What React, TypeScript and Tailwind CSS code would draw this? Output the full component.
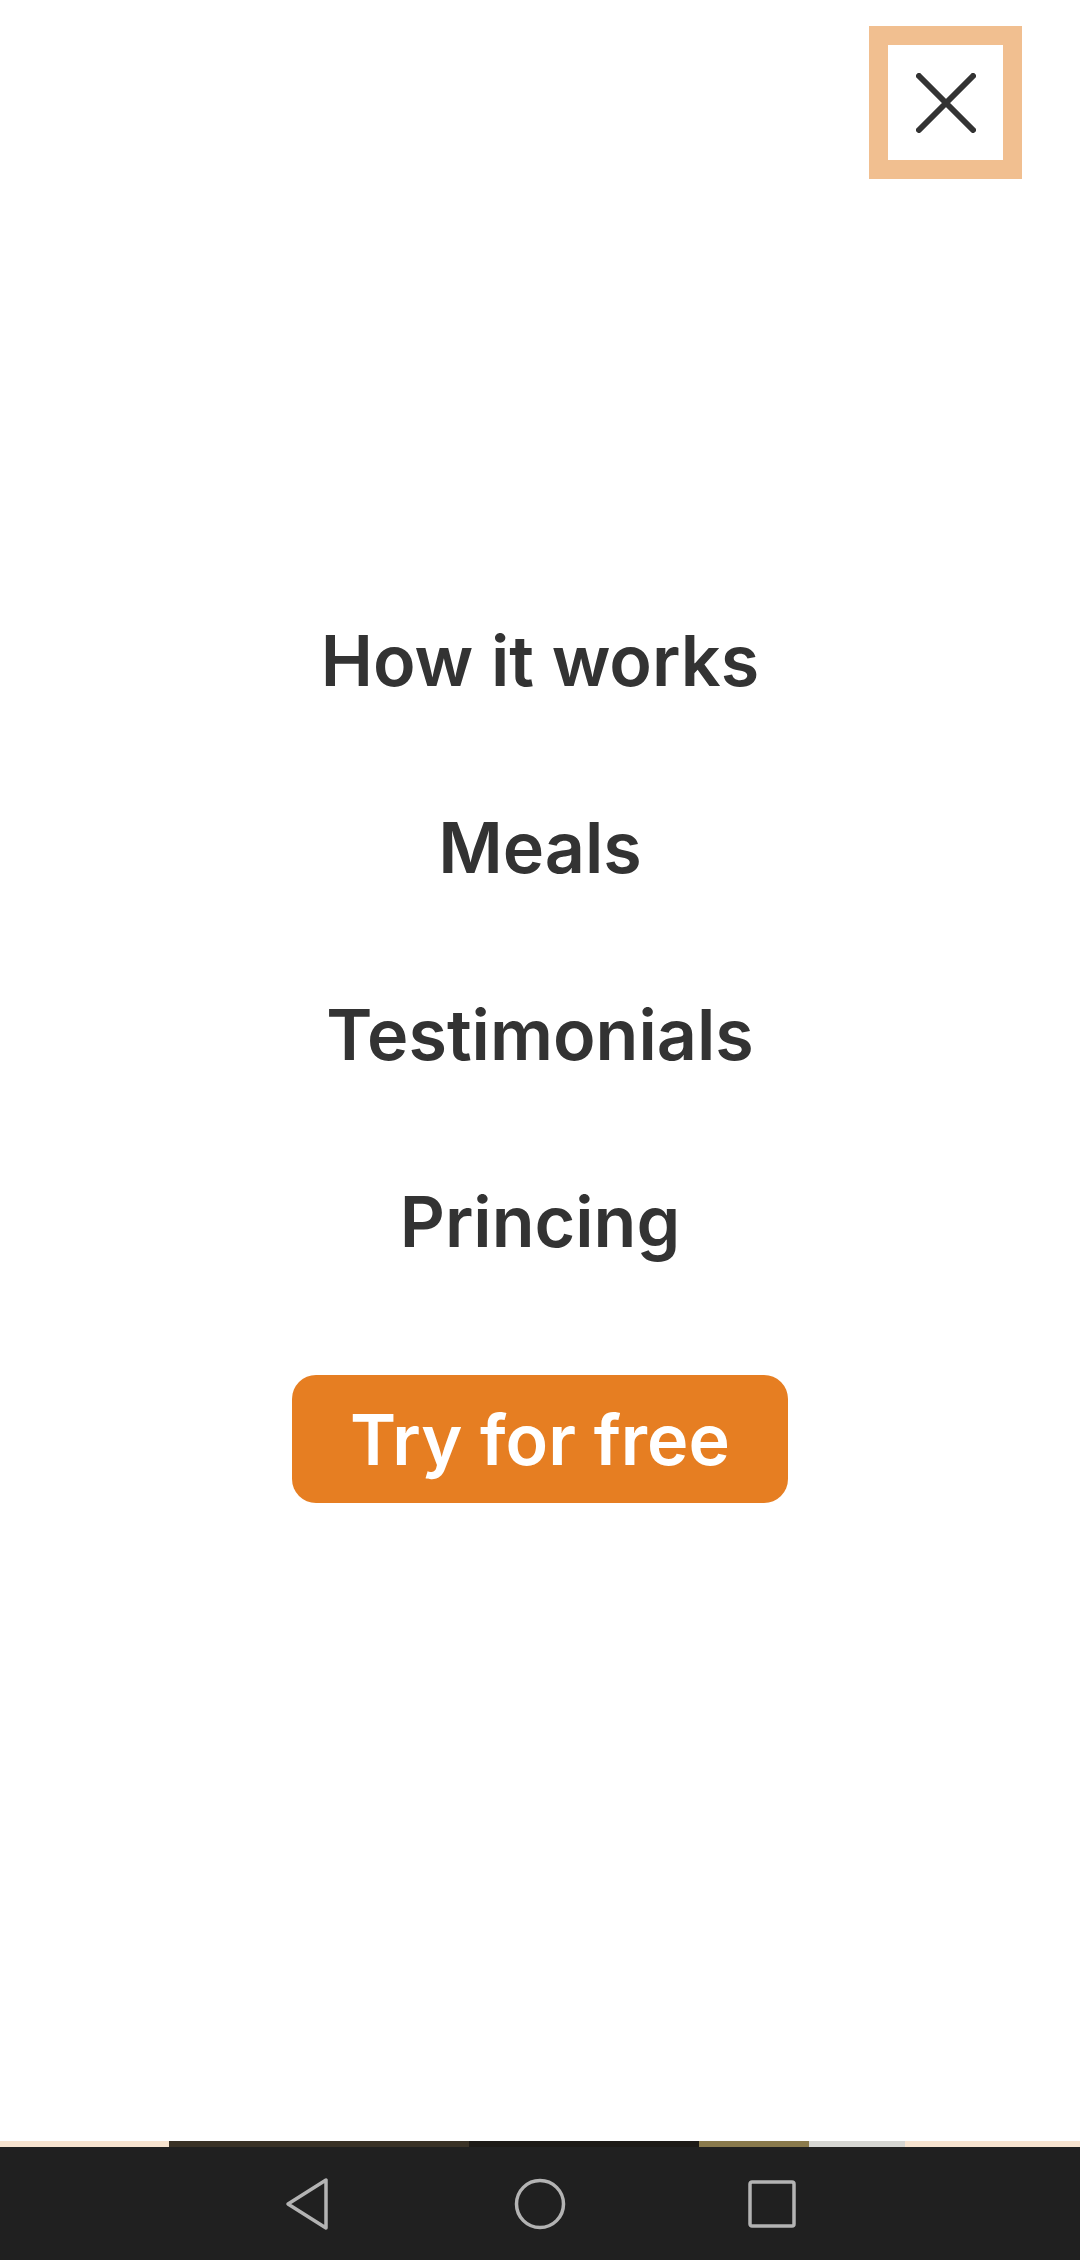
import React from 'react';

const links = ['How it works', 'Meals', 'Testimonials', 'Princing'];

// Close "X" icon inside the orange outlined box
const CloseIcon = () => (
  <svg width="60" height="60" viewBox="0 0 60 60" fill="none">
    <path d="M3 3 L57 57 M57 3 L3 57" stroke="#333333" strokeWidth="6" strokeLinecap="round" />
  </svg>
);

const NavBar = () => (
  <div className="flex flex-col">
    {/* sliver of the page content peeking under the menu */}
    <div className="flex h-[6px] bg-[#f7e3cf]">
      <div className="ml-[169px] h-full w-[300px] bg-[#3a3226]" />
      <div className="h-full w-[230px] bg-[#1d1a16]" />
      <div className="h-full w-[110px] bg-[#8a7a4c]" />
      <div className="h-full w-[96px] bg-[#d6d6d2]" />
    </div>
    <div className="flex h-[113px] items-center justify-center gap-[132px] bg-[#202020]">
      <div className="flex w-[100px] justify-center">
        <svg width="48" height="54" viewBox="0 0 48 54" fill="none">
          <path d="M42 3 L42 51 L4 27 Z" stroke="#b3b3b3" strokeWidth="3.5" strokeLinejoin="round" />
        </svg>
      </div>
      <div className="flex w-[100px] justify-center">
        <svg width="52" height="52" viewBox="0 0 52 52" fill="none">
          <circle cx="26" cy="26" r="23.5" stroke="#b3b3b3" strokeWidth="3.5" />
        </svg>
      </div>
      <div className="flex w-[100px] justify-center">
        <svg width="48" height="48" viewBox="0 0 48 48" fill="none">
          <rect x="2" y="2" width="44" height="44" rx="2" stroke="#b3b3b3" strokeWidth="3.5" />
        </svg>
      </div>
    </div>
  </div>
);

export default function App() {
  return (
    <div className="flex min-h-[2260px] w-[1080px] flex-col bg-white font-['Inter','Roboto',sans-serif]">
      <div className="flex justify-end pr-[58px] pt-[26px]">
        <button className="flex h-[153px] w-[153px] items-center justify-center border-[19px] border-[#f1bf90] bg-white">
          <CloseIcon />
        </button>
      </div>

      <nav className="mt-[388px] flex flex-col items-center">
        {links.map((link) => (
          <a key={link} className="text-[70px] font-semibold leading-[187px] text-[#333333]">
            {link}
          </a>
        ))}
        <button className="mt-[60px] flex h-[128px] w-[496px] items-center justify-center rounded-[24px] bg-[#e67e22] text-[70px] font-semibold text-white">
          Try for free
        </button>
      </nav>

      <div className="mt-auto">
        <NavBar />
      </div>
    </div>
  );
}
